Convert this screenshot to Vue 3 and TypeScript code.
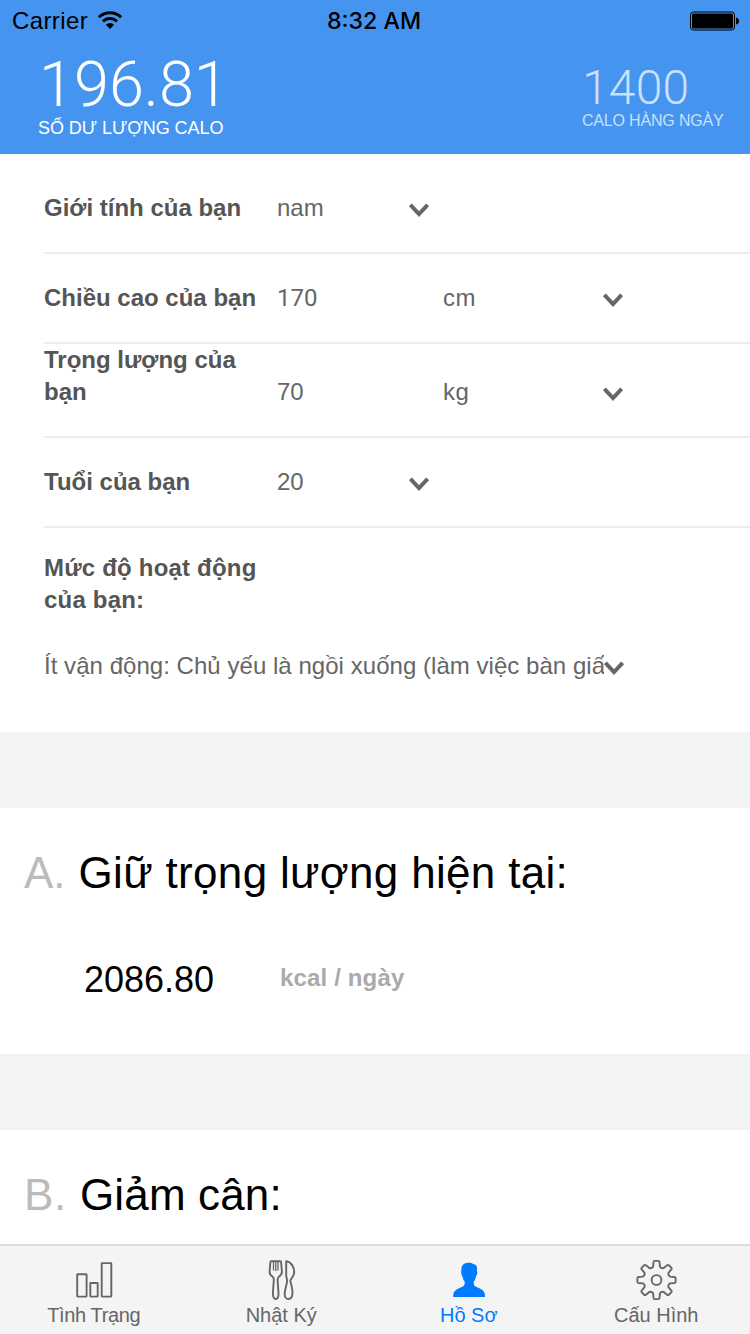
<script setup lang="ts">
interface ProfileRow {
  label: string
  value: string
  unit?: string
  numeric?: boolean
}

interface Tab {
  id: 'status' | 'diary' | 'profile' | 'settings'
  label: string
}

const rows: ProfileRow[] = [
  { label: 'Giới tính của bạn', value: 'nam' },
  { label: 'Chiều cao của bạn', value: '170', unit: 'cm', numeric: true },
  { label: 'Trọng lượng của bạn', value: '70', unit: 'kg' },
  { label: 'Tuổi của bạn', value: '20' },
]

const tabs: Tab[] = [
  { id: 'status', label: 'Tình Trạng' },
  { id: 'diary', label: 'Nhật Ký' },
  { id: 'profile', label: 'Hồ Sơ' },
  { id: 'settings', label: 'Cấu Hình' },
]
const activeTab: Tab['id'] = 'profile'

// Outline of an eight-toothed gear around (cx, cy)
function gearPath(cx: number, cy: number): string {
  const at = (r: number, deg: number): string => {
    const a = (deg * Math.PI) / 180
    return `${(cx + r * Math.sin(a)).toFixed(2)} ${(cy - r * Math.cos(a)).toFixed(2)}`
  }
  let d = ''
  for (let i = 0; i < 8; i++) {
    const a = i * 45
    d += `${i === 0 ? 'M' : 'L'}${at(14, a - 14)}L${at(18.2, a - 9.5)}Q${at(19.3, a - 8.5)} ${at(19.2, a - 5)}`
    d += `L${at(19.2, a + 5)}Q${at(19.3, a + 8.5)} ${at(18.2, a + 9.5)}L${at(14, a + 14)}`
    d += `Q${at(12.2, a + 22.5)} ${at(14, a + 31)}`
  }
  return d + 'Z'
}
const gear = gearPath(24.5, 22)
</script>

<template>
  <div class="screen">
    <header class="header">
      <div class="status-bar">
        <div class="carrier">
          <span>Carrier</span>
          <svg class="wifi" width="26" height="20" viewBox="0 0 26 20">
            <path d="M1.9 7.2A15.8 15.8 0 0 1 24.1 7.2" />
            <path d="M6 11.4A9.9 9.9 0 0 1 20 11.4" />
            <path class="solid" d="M13 19L8.9 14.7A5.9 5.9 0 0 1 17.1 14.7Z" />
          </svg>
        </div>
        <span class="time">8:32 AM</span>
        <svg class="battery" width="50" height="20" viewBox="0 0 50 20">
          <rect class="shell" x="0.5" y="1" width="44" height="18" rx="3" />
          <rect x="2" y="2.5" width="41" height="15" rx="1.6" />
          <path d="M46 6.5Q49 7 49 10Q49 13 46 13.5Z" />
        </svg>
      </div>
      <div class="totals">
        <div class="balance">
          <div class="balance-value">196.81</div>
          <div class="balance-label">SỐ DƯ LƯỢNG CALO</div>
        </div>
        <div class="daily">
          <div class="daily-value">1400</div>
          <div class="daily-label">CALO HÀNG NGÀY</div>
        </div>
      </div>
    </header>

    <main class="content">
      <section class="profile-form">
        <div v-for="row in rows" :key="row.label" class="row">
          <div class="label">{{ row.label }}</div>
          <div class="value" :class="{ numeric: row.numeric, wide: row.unit }">{{ row.value }}</div>
          <div v-if="row.unit" class="unit">{{ row.unit }}</div>
          <svg class="chevron" width="20" height="14" viewBox="0 0 20 14">
            <path d="M1.4 1.8L10 11L18.6 1.8" />
          </svg>
        </div>
        <div class="activity">
          <div class="label activity-label">Mức độ hoạt động của bạn:</div>
          <div class="select">
            <span class="select-text">Ít vận động: Chủ yếu là ngồi xuống (làm việc bàn giấ</span>
            <svg class="chevron" width="20" height="14" viewBox="0 0 20 14">
              <path d="M1.4 1.8L10 11L18.6 1.8" />
            </svg>
          </div>
        </div>
      </section>

      <section class="plan">
        <h2><span class="letter">A.</span><span class="title">Giữ trọng lượng hiện tại:</span></h2>
        <div class="amount">
          <span class="kcal">2086.80</span>
          <span class="per">kcal / ngày</span>
        </div>
      </section>

      <section class="plan">
        <h2><span class="letter b">B.</span><span class="title b">Giảm cân:</span></h2>
      </section>
    </main>

    <nav class="tabs">
      <div v-for="tab in tabs" :key="tab.id" class="tab" :class="['tab-' + tab.id, { active: tab.id === activeTab }]">
        <svg width="48" height="44" viewBox="0 0 48 44">
          <g v-if="tab.id === 'status'">
            <rect x="7.2" y="16.2" width="9.4" height="22.4" rx="0.5" />
            <rect x="20.3" y="25" width="7.4" height="13.6" rx="0.5" />
            <rect x="31.7" y="5.1" width="9.6" height="33.5" rx="0.5" />
          </g>
          <g v-else-if="tab.id === 'diary'">
            <path d="M14.2 3.2Q13.5 3.2 13.4 4L12.6 13.5Q12.4 16.6 15.4 18.5Q17 19.6 16.8 22L15.9 35Q15.9 41 18.7 41Q21.6 41 21.5 35L20.6 22Q20.5 19.6 22.1 18.5Q25.1 16.6 24.9 13.5L24.1 4Q24 3.2 23.3 3.2Z" />
            <path class="thin" d="M16.5 3.5V12.6M18.8 3.5V13M21 3.5V12.6" />
            <path d="M29.2 3.1C34 3.6 37.2 9 37.2 14.2C37.2 17.5 34.8 20 33.3 22.2C33.6 25.4 35.5 29.5 35.5 34.2C35.5 38.6 33.6 41 31.2 41C28.7 41 27.4 38.6 27.7 35C28 30.5 30.2 26 30.1 22.5C30 20.5 29.2 19.5 29.2 17.5Z" />
          </g>
          <path
            v-else-if="tab.id === 'profile'"
            class="filled"
            d="M16.5 11.8C16 7 19.5 4.8 24 4.8C25.8 4.8 27.3 5.2 28.2 6C31.5 6.4 32.6 8.8 31.9 12.8C32.7 14.8 32.1 17 31 18.2C30.6 20.8 29.8 22.4 28.8 23.6C28.4 27.2 29.5 28.3 32.8 29.4C37.4 31 40 33.5 40 38V39H8.2V38C8.2 33.5 11 31 15.6 29.4C18.8 28.3 20.1 27.2 19.7 23.6C18.6 22.3 17.8 20.5 17.4 18.2C16.3 16.8 15.8 14.4 16.5 11.8Z"
          />
          <g v-else>
            <path :d="gear" />
            <circle cx="24.5" cy="22" r="4.9" />
          </g>
        </svg>
        <span class="tab-label">{{ tab.label }}</span>
      </div>
    </nav>
  </div>
</template>

<style>
body {
  margin: 0;
}
</style>

<style scoped>
.screen {
  width: 750px;
  height: 1334px;
  display: flex;
  flex-direction: column;
  overflow: hidden;
  background: #fff;
  font-family: "Liberation Sans", Arial, sans-serif;
  font-size: 24px;
  line-height: 32px;
  color: #555;
}
.header {
  flex: none;
  box-sizing: border-box;
  height: 154px;
  background: #4595f0;
  color: #fff;
}
.status-bar {
  display: grid;
  grid-template-columns: 1fr auto 1fr;
  align-items: center;
  height: 42px;
  padding: 0 10px 0 12px;
  box-sizing: border-box;
  color: #000;
}
.carrier {
  display: flex;
  align-items: center;
  gap: 9px;
  letter-spacing: 0.4px;
}
.wifi {
  margin-bottom: 2px;
}
.wifi path {
  fill: none;
  stroke: #000;
  stroke-width: 3;
}
.wifi path.solid {
  fill: #000;
  stroke: none;
}
.time {
  margin-right: 4px;
  font-family: Inter, sans-serif;
  font-size: 23.2px;
  font-weight: 500;
}
.battery {
  justify-self: end;
  margin-bottom: 1px;
}
.battery .shell {
  fill: none;
  stroke: #000;
  stroke-width: 1;
}
.totals {
  display: flex;
  justify-content: space-between;
  padding-left: 38px;
}
.balance {
  margin-top: 11px;
}
.balance-value {
  font: 300 63px/64px Roboto, sans-serif;
  letter-spacing: 0;
  padding-left: 1px;
}
.balance-label {
  font-size: 18px;
  line-height: 22px;
  letter-spacing: -0.05px;
}
.daily {
  width: 168px;
  margin-top: 22px;
  color: rgba(255, 255, 255, 0.72);
}
.daily-value {
  font: 300 48px/48px Roboto, sans-serif;
  letter-spacing: 0.2px;
}
.daily-label {
  font-size: 16px;
  line-height: 17px;
  letter-spacing: -0.18px;
}
.content {
  flex: 1;
  min-height: 0;
  overflow: hidden;
  background: #f2f3f5;
}
.profile-form {
  padding: 10px 0 50px 44px;
  background: #fff;
}
.row {
  display: flex;
  align-items: flex-end;
  min-height: 60px;
  padding-bottom: 28px;
  border-bottom: 2px solid #ededed;
}
.label {
  width: 225px;
  margin-right: 8px;
  font-weight: bold;
}
.value {
  width: 132px;
  color: #666;
}
.value.wide {
  width: 166px;
}
.value.numeric {
  font-family: Roboto, sans-serif;
}
.unit {
  width: 160px;
  color: #666;
  letter-spacing: 0.6px;
}
.chevron {
  flex: none;
  margin-bottom: 7px;
}
.chevron path {
  fill: none;
  stroke: #666;
  stroke-width: 4;
}
.activity {
  padding-top: 24px;
}
.activity-label {
  letter-spacing: 0.2px;
}
.select {
  display: flex;
  align-items: flex-end;
  margin-top: 34px;
  color: #666;
}
.select-text {
  width: 560px;
  overflow: hidden;
  white-space: nowrap;
  letter-spacing: 0.04px;
}
.plan {
  box-sizing: border-box;
  height: 246px;
  margin-top: 76px;
  padding-top: 39px;
  background: #fff;
  color: #000;
}
.plan h2 {
  display: flex;
  gap: 13px;
  margin: 0 0 59px 24px;
  font-size: 44px;
  font-weight: normal;
  line-height: 52px;
}
.letter {
  color: #bbb;
}
.letter.b {
  letter-spacing: 0.7px;
}
.title {
  letter-spacing: 0.32px;
}
.title.b {
  letter-spacing: 0.15px;
}
.amount {
  display: grid;
  grid-template-columns: 196px 1fr;
  align-items: start;
  padding-left: 84px;
}
.kcal {
  font-size: 36px;
  line-height: 43px;
}
.per {
  font-weight: bold;
  line-height: 40px;
  letter-spacing: 0.15px;
  color: #aaa;
}
.tabs {
  flex: none;
  box-sizing: border-box;
  height: 90px;
  display: grid;
  grid-template-columns: repeat(4, 1fr);
  padding-top: 12px;
  border-top: 2px solid #dcdcdc;
  background: #f4f4f4;
}
.tab {
  display: flex;
  flex-direction: column;
  align-items: center;
  color: #666;
}
.tab svg {
  display: block;
  margin-bottom: 1px;
  fill: none;
  stroke: currentColor;
  stroke-width: 1.9;
  stroke-linejoin: round;
}
.tab .thin {
  stroke-width: 1.3;
}
.tab .filled {
  fill: currentColor;
  stroke: none;
}
.tab.active {
  color: #007aff;
}
.tab-label {
  font-size: 20px;
  line-height: 24px;
}
.tab-status .tab-label {
  letter-spacing: -0.35px;
}
</style>
